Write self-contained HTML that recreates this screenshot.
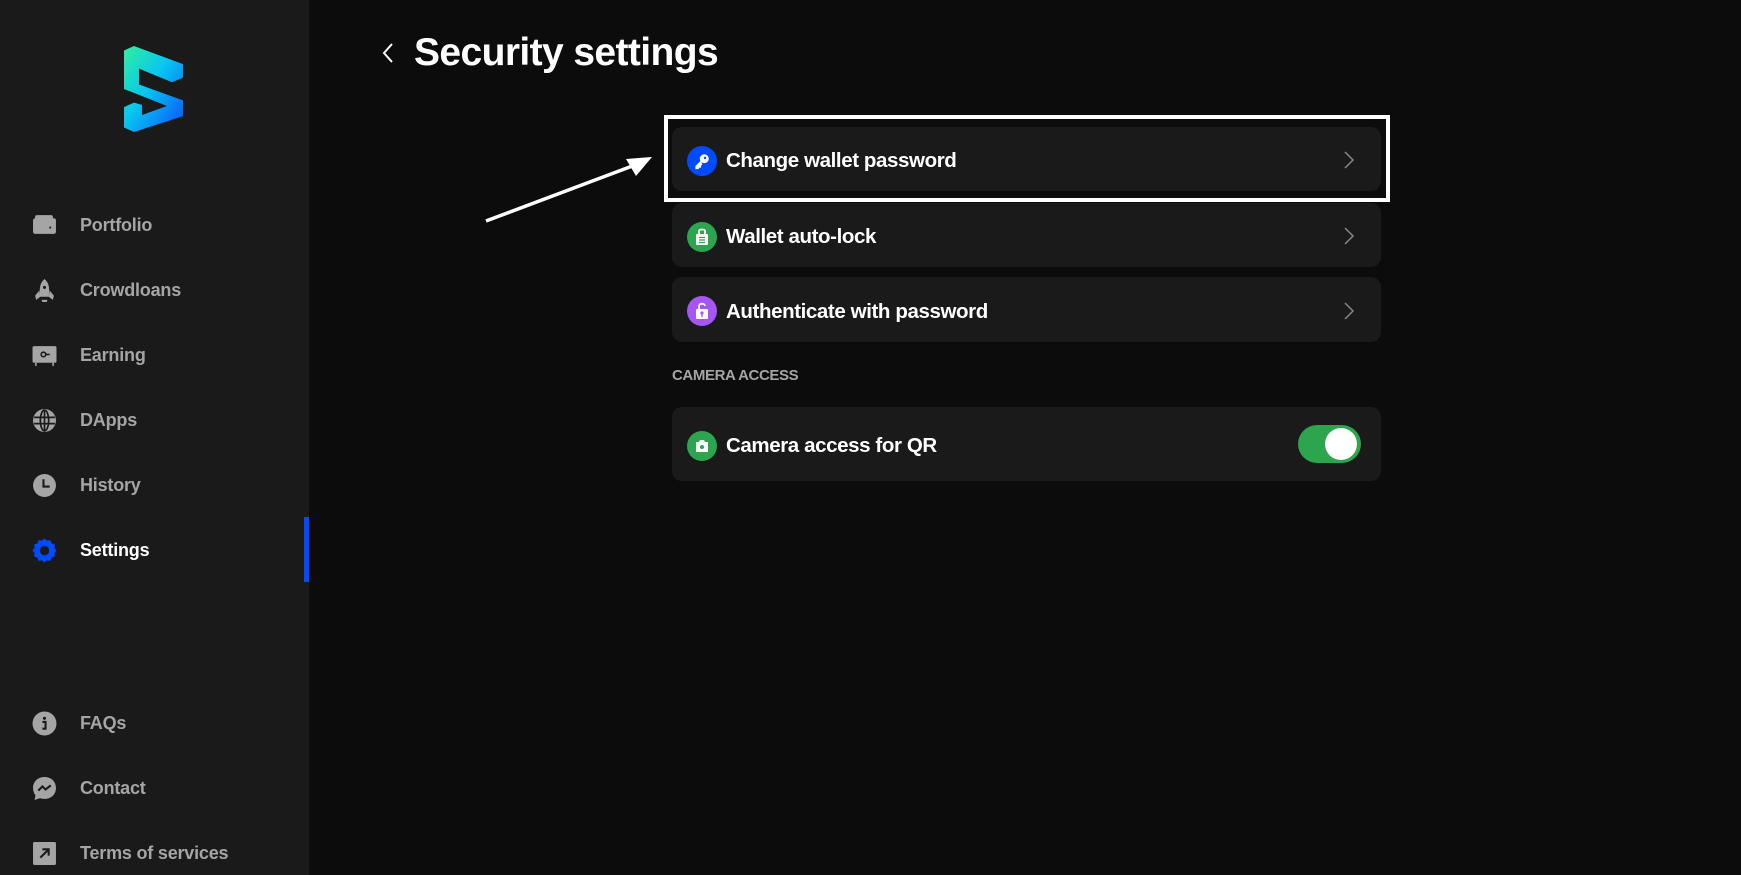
<!DOCTYPE html>
<html><head><meta charset="utf-8"><style>
*{margin:0;padding:0;box-sizing:border-box}
body{width:1741px;height:875px;background:#0c0c0c;font-family:"Liberation Sans",sans-serif;position:relative;overflow:hidden}
.side{position:absolute;left:0;top:0;width:309px;height:875px;background:#1a1a1a}
.ind{position:absolute;left:304px;top:517px;width:5px;height:65px;background:#004bff}
.nav{position:absolute;left:32px;height:26px;display:flex;align-items:center;color:#a5a5a5;font-size:18px;font-weight:600;letter-spacing:-0.2px}
.nav svg{width:25px;height:25px;margin-right:23px}
.nav.act{color:#fff}
.row{position:absolute;left:672px;width:709px;background:#1a1a1a;border-radius:10px;display:flex;align-items:center}
.ic{width:30px;height:30px;border-radius:50%;margin-left:15px;margin-right:9px;display:flex;align-items:center;justify-content:center;margin-top:3px}
.lbl{color:#fff;font-size:20.5px;font-weight:700;letter-spacing:-0.4px;padding-top:4px}
.chev{position:absolute;right:26px;top:50%;margin-top:-8px}
</style></head><body>
<div class="side">
<svg style="position:absolute;left:124px;top:46px" width="60" height="86" viewBox="0 0 60 76" preserveAspectRatio="none"><defs><linearGradient id="g" x1="0" y1="0" x2="1" y2="1"><stop offset="0" stop-color="#2ef0a0"/><stop offset=".45" stop-color="#08c6f0"/><stop offset="1" stop-color="#0a4fff"/></linearGradient></defs><path d="M0 4 L10 0 L59 16 L59 28 L48 32 L15 20 L15 34 L59 48 L59 62 L10 76 L0 72 L0 54 L10 50 L18 52 L18 61 L43 53 L0 38 Z" fill="url(#g)"/></svg>
<div class="nav" style="top:212px"><svg viewBox="0 0 24 24"><rect x="1" y="5" width="22" height="15" rx="2" fill="#a5a5a5"/><rect x="3" y="2" width="17" height="4" rx="1.5" fill="#a5a5a5"/><circle cx="17.5" cy="14" r="1" fill="#1a1a1a"/></svg>Portfolio</div>
<div class="nav" style="top:277px"><svg viewBox="0 0 24 24"><path d="M12 1 C17 5 17 12 16 18 L8 18 C7 12 7 5 12 1Z M7 12 L3 17 L4 21 L8 18Z M17 12 L21 17 L20 21 L16 18Z M9 21 L15 21 L14 23 L10 23Z" fill="#a5a5a5"/><circle cx="12" cy="9" r="1.5" fill="#1a1a1a"/></svg>Crowdloans</div>
<div class="nav" style="top:342px"><svg viewBox="0 0 24 24"><rect x="0.5" y="3" width="23" height="16" rx="1.5" fill="#a5a5a5"/><rect x="3" y="19" width="1.5" height="3" fill="#a5a5a5"/><rect x="19.5" y="19" width="1.5" height="3" fill="#a5a5a5"/><circle cx="11" cy="11" r="2.2" fill="none" stroke="#1a1a1a" stroke-width="1.5"/><path d="M13 11 H17" stroke="#1a1a1a" stroke-width="1.5"/></svg>Earning</div>
<div class="nav" style="top:407px"><svg viewBox="0 0 24 24"><circle cx="12" cy="12" r="11" fill="#a5a5a5"/><g fill="none" stroke="#1a1a1a" stroke-width="1.6"><ellipse cx="12" cy="12" rx="4" ry="10"/><path d="M2 9 H22 M2 15 H22 M12 2 V22"/></g></svg>DApps</div>
<div class="nav" style="top:472px"><svg viewBox="0 0 24 24"><circle cx="12" cy="12" r="11" fill="#a5a5a5"/><path d="M11 6 V13 H17" fill="none" stroke="#1a1a1a" stroke-width="2"/></svg>History</div>
<div class="nav act" style="top:537px"><svg viewBox="0 0 24 24"><path d="M12 0.5 L14.5 2.5 L17.7 2 L18.8 5.2 L22 6.3 L21.5 9.5 L23.5 12 L21.5 14.5 L22 17.7 L18.8 18.8 L17.7 22 L14.5 21.5 L12 23.5 L9.5 21.5 L6.3 22 L5.2 18.8 L2 17.7 L2.5 14.5 L0.5 12 L2.5 9.5 L2 6.3 L5.2 5.2 L6.3 2 L9.5 2.5Z" fill="#004bff"/><circle cx="12" cy="12" r="4.5" fill="#1a1a1a"/></svg>Settings</div>
<div class="nav" style="top:710px"><svg viewBox="0 0 24 24"><circle cx="12" cy="12" r="11.5" fill="#a5a5a5"/><circle cx="12" cy="7" r="1.5" fill="#1a1a1a"/><path d="M10 10.5 H13 V17 M10 17 H14" fill="none" stroke="#1a1a1a" stroke-width="2"/></svg>FAQs</div>
<div class="nav" style="top:775px"><svg viewBox="0 0 24 24"><path d="M12 1 C18.5 1 23 5.5 23 11.5 C23 17.5 18.5 22 12 22 C10.5 22 9 21.7 7.8 21.2 L2.5 23 L3.3 18.5 C1.8 16.6 1 14.2 1 11.5 C1 5.5 5.5 1 12 1Z" fill="#a5a5a5"/><path d="M6 14 L10 10 L13 13 L18 9" fill="none" stroke="#1a1a1a" stroke-width="2"/></svg>Contact</div>
<div class="nav" style="top:840px"><svg viewBox="0 0 24 24"><rect x="1" y="1" width="22" height="22" rx="1.5" fill="#a5a5a5"/><path d="M8 16 L16 8 M10 8 H16 V14" fill="none" stroke="#1a1a1a" stroke-width="2"/></svg>Terms of services</div>
<div class="ind"></div>
</div>

<svg style="position:absolute;left:380px;top:42px" width="16" height="22" viewBox="0 0 16 22"><path d="M12 2 L4 11 L12 20" fill="none" stroke="#fff" stroke-width="2"/></svg>
<div style="position:absolute;left:414px;top:31px;color:#fff;font-size:39px;font-weight:700;letter-spacing:-0.6px">Security settings</div>

<svg style="position:absolute;left:480px;top:148px" width="180" height="80" viewBox="0 0 180 80"><path d="M6 73 L155 17" stroke="#fff" stroke-width="3.5"/><path d="M172 9 L146 11 L156 28Z" fill="#fff"/></svg>
<div style="position:absolute;left:664px;top:115px;width:726px;height:87px;border:4px solid #fff"></div>

<div class="row" style="top:127px;height:64px"><div class="ic" style="background:#004bff"><svg width="18" height="18" viewBox="0 0 24 24"><circle cx="15" cy="9" r="6" fill="#fff"/><path d="M11 12 L4 19 L4 22 L7 22 L8 20 L10 20 L10 18 L12 16" fill="#fff" stroke="#fff" stroke-width="1.5"/><circle cx="16" cy="8" r="1.6" fill="#004bff"/></svg></div><div class="lbl">Change wallet password</div><svg class="chev" width="12" height="18" viewBox="0 0 12 18"><path d="M2 1 L10 9 L2 17" fill="none" stroke="#888" stroke-width="1.5"/></svg></div>
<div class="row" style="top:203px;height:64px"><div class="ic" style="background:#2da44e"><svg width="16" height="18" viewBox="0 0 16 18"><path d="M5 6 V3 C5 1 11 1 11 3 V6" fill="none" stroke="#fff" stroke-width="1.8"/><rect x="2" y="6" width="12" height="11" rx="1" fill="#fff"/><path d="M5 9.5 H11 M5 12 H11 M5 14.5 H11" stroke="#2da44e" stroke-width="1.2"/></svg></div><div class="lbl">Wallet auto-lock</div><svg class="chev" width="12" height="18" viewBox="0 0 12 18"><path d="M2 1 L10 9 L2 17" fill="none" stroke="#888" stroke-width="1.5"/></svg></div>
<div class="row" style="top:277px;height:65px"><div class="ic" style="background:#a855f7"><svg width="16" height="18" viewBox="0 0 16 18"><path d="M5 7 V4 C5 1 11 1 11 4" fill="none" stroke="#fff" stroke-width="1.8"/><rect x="2" y="7" width="12" height="10" rx="1" fill="#fff"/><circle cx="8" cy="11" r="1.6" fill="#a855f7"/><path d="M8 12 V15" stroke="#a855f7" stroke-width="1.3"/></svg></div><div class="lbl">Authenticate with password</div><svg class="chev" width="12" height="18" viewBox="0 0 12 18"><path d="M2 1 L10 9 L2 17" fill="none" stroke="#888" stroke-width="1.5"/></svg></div>
<div style="position:absolute;left:672px;top:367px;color:#a5a5a5;font-size:15px;font-weight:700;letter-spacing:-0.4px">CAMERA ACCESS</div>
<div class="row" style="top:407px;height:74px"><div class="ic" style="background:#2da44e"><svg width="16" height="16" viewBox="0 0 16 16"><path d="M2 4 H5 L6 2 H10 L11 4 H14 V14 H2Z" fill="#fff"/><circle cx="8" cy="9" r="2" fill="#2da44e"/></svg></div><div class="lbl">Camera access for QR</div>
<div style="position:absolute;left:626px;top:18px;width:63px;height:38px;border-radius:19px;background:#2da44e"><div style="position:absolute;right:4px;top:3px;width:32px;height:32px;border-radius:50%;background:#fff"></div></div></div>
</body></html>
